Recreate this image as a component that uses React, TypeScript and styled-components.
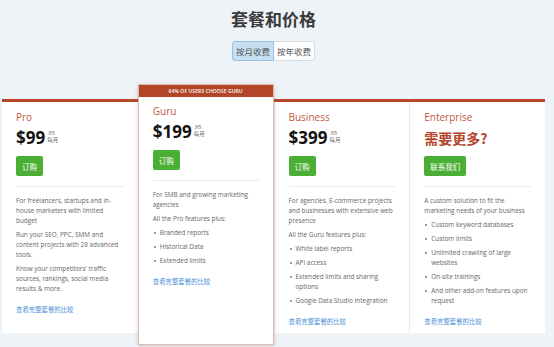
import { FC } from "react";
import styled, { createGlobalStyle } from "styled-components";

const GlobalStyle = createGlobalStyle`
  html, body {
    margin: 0;
    padding: 0;
    background: #eef3f7;
  }
  body {
    font-family: "Open Sans", "Noto Sans CJK SC", sans-serif;
    color: #555;
  }
  * { box-sizing: border-box; }
`;

const Page = styled.div`
  width: 545px;
  padding: 8px 0 0 2px;
  height: 347px;
  overflow: hidden;
`;

const Title = styled.h1`
  margin: 0;
  text-align: center;
  font-family: "Noto Sans CJK SC", sans-serif;
  font-size: 17px;
  line-height: 22px;
  font-weight: 700;
  color: #3b3b3b;
`;

const Toggle = styled.div`
  display: flex;
  justify-content: center;
  margin-top: 11px;
`;

const ToggleButton = styled.button<{ $active?: boolean }>`
  height: 20px;
  padding: 0 3px;
  font-family: "Noto Sans CJK SC", sans-serif;
  font-size: 8.5px;
  color: #555;
  background: ${(p) => (p.$active ? "#c7dff3" : "#fff")};
  border: 1px solid ${(p) => (p.$active ? "#93c1e8" : "#d6dbe0")};
  border-radius: ${(p) => (p.$active ? "3px 0 0 3px" : "0 3px 3px 0")};
  ${(p) => (p.$active ? "" : "border-left: none;")}
`;

const Plans = styled.div`
  display: grid;
  grid-template-columns: repeat(4, 1fr);
  margin-top: 38px;
  background: #fff;
  border-top: 3px solid #b84729;
  height: 234px;
`;

const Card = styled.div<{ $featured?: boolean }>`
  display: flex;
  flex-direction: column;
  padding: 8px 14px 0 14px;
  border-left: 1px solid #e8ebee;
  &:first-child { border-left: none; }
  ${(p) =>
    p.$featured &&
    `
    margin: -18px 0 -12px;
    padding: 0;
    border: 1px solid #dbbcb3;
    box-shadow: 0 1px 4px rgba(120, 60, 40, 0.25);
    background: #fff;
    position: relative;
    z-index: 1;
  `}
`;

const Banner = styled.div`
  height: 12px;
  background: #b34529;
  color: #fff;
  font-size: 5px;
  font-weight: 600;
  line-height: 12px;
  text-align: center;
  letter-spacing: 0.1px;
`;

const CardBody = styled.div`
  display: flex;
  flex-direction: column;
  padding: 7px 14px 0 14px;
`;

const PlanName = styled.div`
  font-size: 10px;
  line-height: 14px;
  color: #c05a3f;
`;

const PriceRow = styled.div`
  display: flex;
  align-items: flex-start;
  margin-top: 4px;
  height: 20px;
`;

const Price = styled.span`
  font-size: 17px;
  line-height: 20px;
  font-weight: 700;
  color: #141414;
`;

const PriceNote = styled.span`
  display: flex;
  flex-direction: column;
  margin: 2px 0 0 2px;
  font-size: 5.5px;
  line-height: 7px;
  color: #666;
`;

const Headline = styled.div`
  margin-top: 4px;
  height: 20px;
  font-family: "Noto Sans CJK SC", sans-serif;
  font-size: 14px;
  line-height: 20px;
  font-weight: 700;
  color: #b3452a;
`;

const BuyButton = styled.button`
  align-self: flex-start;
  margin-top: 8px;
  height: 20px;
  padding: 0 6px;
  border: none;
  border-radius: 2px;
  background: #4caf35;
  color: #fff;
  font-family: "Noto Sans CJK SC", sans-serif;
  font-size: 7.5px;
`;

const Divider = styled.hr`
  margin: 10px 0 9px;
  border: none;
  border-top: 1px solid #ebebeb;
`;

const Text = styled.p`
  margin: 0 0 4px;
  font-size: 6.4px;
  line-height: 10px;
  color: #666;
`;

const List = styled.ul`
  margin: 0;
  padding: 0;
  list-style: none;
`;

const Item = styled.li`
  position: relative;
  padding-left: 7px;
  margin-bottom: 4px;
  font-size: 6.4px;
  line-height: 10px;
  color: #666;
  &::before {
    content: "";
    position: absolute;
    left: 1px;
    top: 4px;
    width: 2px;
    height: 2px;
    background: #999;
  }
`;

const CompareLink = styled.a`
  margin-top: 7px;
  font-family: "Noto Sans CJK SC", sans-serif;
  font-size: 6.4px;
  line-height: 10px;
  color: #4a90d6;
  text-decoration: none;
`;

interface PlanI {
  name: string;
  price?: string;
  headline?: string;
  button: string;
  texts: string[];
  items: string[];
}

const plans: PlanI[] = [
  {
    name: "Pro",
    price: "$99",
    button: "订购",
    texts: [
      "For freelancers, startups and in-house marketers with limited budget",
      "Run your SEO, PPC, SMM and content projects with 28 advanced tools.",
      "Know your competitors' traffic sources, rankings, social media results & more.",
    ],
    items: [],
  },
  {
    name: "Guru",
    price: "$199",
    button: "订购",
    texts: ["For SMB and growing marketing agencies", "All the Pro features plus:"],
    items: ["Branded reports", "Historical Data", "Extended limits"],
  },
  {
    name: "Business",
    price: "$399",
    button: "订购",
    texts: [
      "For agencies, E-commerce projects and businesses with extensive web presence",
      "All the Guru features plus:",
    ],
    items: [
      "White label reports",
      "API access",
      "Extended limits and sharing options",
      "Google Data Studio Integration",
    ],
  },
  {
    name: "Enterprise",
    headline: "需要更多?",
    button: "联系我们",
    texts: ["A custom solution to fit the marketing needs of your business"],
    items: [
      "Custom keyword databases",
      "Custom limits",
      "Unlimited crawling of large websites",
      "On-site trainings",
      "And other add-on features upon request",
    ],
  },
];

const PlanContent: FC<{ plan: PlanI }> = ({ plan }) => (
  <>
    <PlanName>{plan.name}</PlanName>
    {plan.price ? (
      <PriceRow>
        <Price>{plan.price}</Price>
        <PriceNote>
          <span>.95</span>
          <span>每月</span>
        </PriceNote>
      </PriceRow>
    ) : (
      <Headline>{plan.headline}</Headline>
    )}
    <BuyButton>{plan.button}</BuyButton>
    <Divider />
    {plan.texts.map((t, i) => (
      <Text key={i}>{t}</Text>
    ))}
    {plan.items.length > 0 && (
      <List>
        {plan.items.map((t, i) => (
          <Item key={i}>{t}</Item>
        ))}
      </List>
    )}
    <CompareLink href="#">查看完整套餐的比较</CompareLink>
  </>
);

const App: FC = () => {
  return (
    <Page>
      <GlobalStyle />
      <Title>套餐和价格</Title>
      <Toggle>
        <ToggleButton $active>按月收费</ToggleButton>
        <ToggleButton>按年收费</ToggleButton>
      </Toggle>
      <Plans>
        {plans.map((plan) =>
          plan.name === "Guru" ? (
            <Card $featured key={plan.name}>
              <Banner>64% OF USERS CHOOSE GURU</Banner>
              <CardBody>
                <PlanContent plan={plan} />
              </CardBody>
            </Card>
          ) : (
            <Card key={plan.name}>
              <PlanContent plan={plan} />
            </Card>
          )
        )}
      </Plans>
    </Page>
  );
};

export default App;
